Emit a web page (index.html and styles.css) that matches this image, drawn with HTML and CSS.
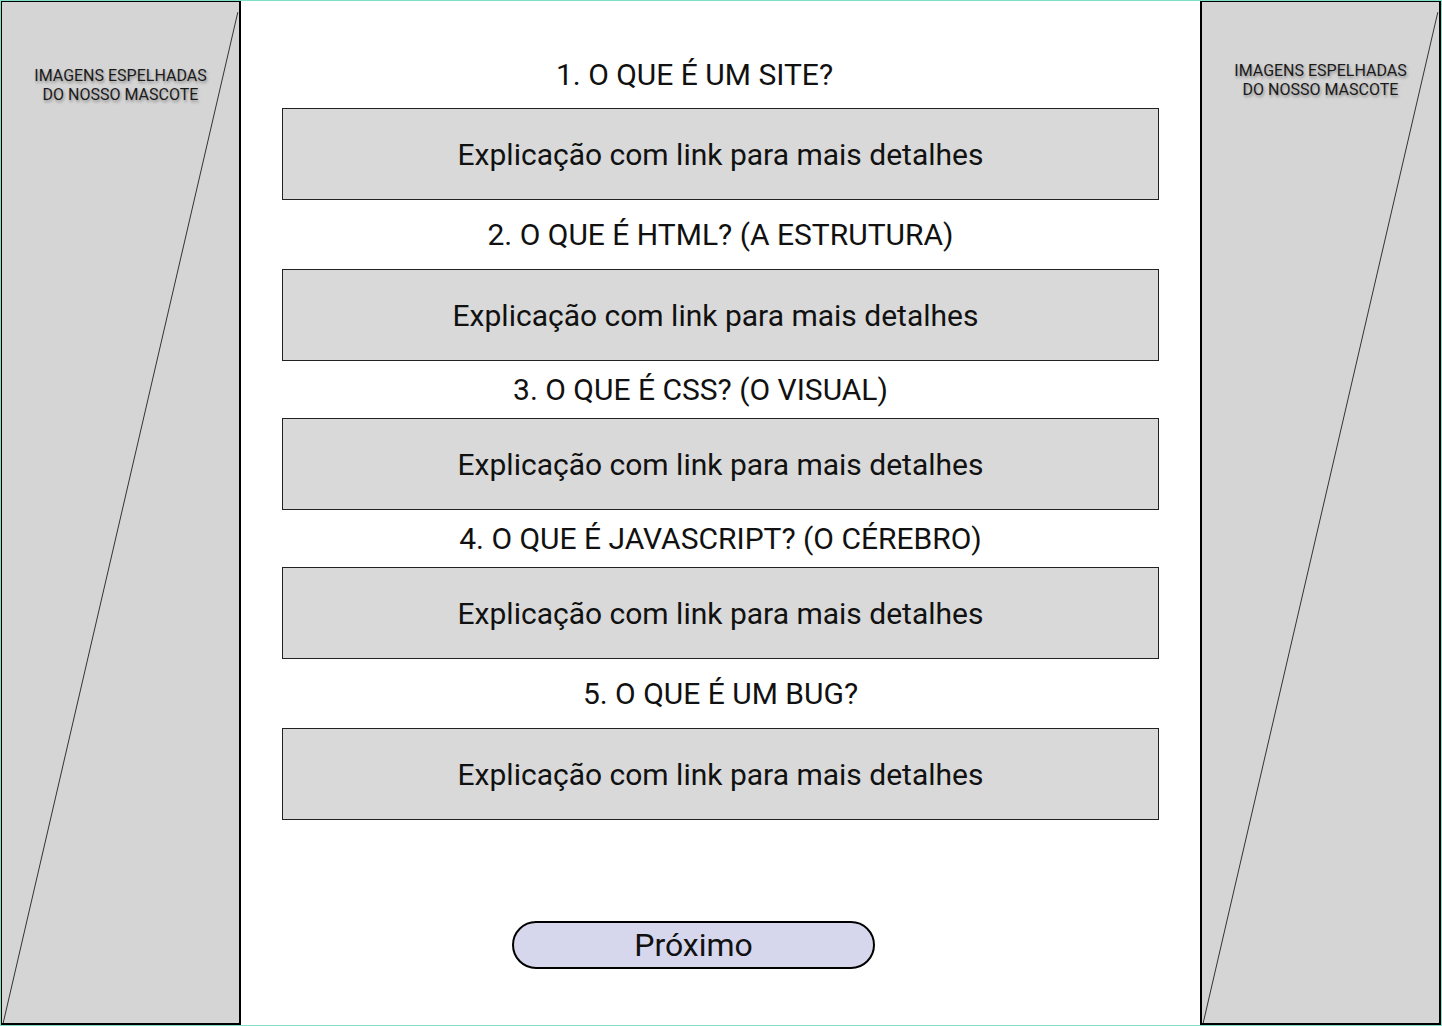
FILE: index.html
```html
<!DOCTYPE html>
<html lang="pt">
<head>
<meta charset="utf-8">
<title>Guia</title>
<link rel="stylesheet" href="styles.css">
</head>
<body>
<div class="page">
  <aside class="side side-left">
    <svg class="diag" viewBox="0 0 100 100" preserveAspectRatio="none"><line x1="99.5" y1="1" x2="0.5" y2="100" vector-effect="non-scaling-stroke"/></svg>
    <p class="side-text">IMAGENS ESPELHADAS<br>DO NOSSO MASCOTE</p>
  </aside>
  <main class="center">
    <h2 class="q q1">1. O QUE É UM SITE?</h2>
    <div class="box">Explicação com link para mais detalhes</div>
    <h2 class="q q2">2. O QUE É HTML? (A ESTRUTURA)</h2>
    <div class="box box2">Explicação com link para mais detalhes</div>
    <h2 class="q q3">3. O QUE É CSS? (O VISUAL)</h2>
    <div class="box">Explicação com link para mais detalhes</div>
    <h2 class="q q4">4. O QUE É JAVASCRIPT? (O CÉREBRO)</h2>
    <div class="box">Explicação com link para mais detalhes</div>
    <h2 class="q q5">5. O QUE É UM BUG?</h2>
    <div class="box">Explicação com link para mais detalhes</div>
    <button class="next">Próximo</button>
  </main>
  <aside class="side side-right">
    <svg class="diag" viewBox="0 0 100 100" preserveAspectRatio="none"><line x1="99.5" y1="1" x2="0.5" y2="100" vector-effect="non-scaling-stroke"/></svg>
    <p class="side-text">IMAGENS ESPELHADAS<br>DO NOSSO MASCOTE</p>
  </aside>
</div>
</body>
</html>
```

FILE: styles.css
```css
* { box-sizing: border-box; }
html, body { margin: 0; padding: 0; background: #fff; }
body { font-family: Roboto, "Liberation Sans", sans-serif; color: #111; }

.page {
  width: 1442px;
  height: 1026px;
  border: 1px solid #7fdfc8;
  display: grid;
  grid-template-columns: 240px 959px 241px;
}

.side {
  position: relative;
  background: #d5d5d5;
  border: 2px solid #000;
  border-top-width: 1px;
}
.side-left { border-left-width: 1px; }
.side-right { border-right-width: 2px; }

.diag {
  position: absolute;
  left: 0; top: 0;
  width: 100%; height: 100%;
}
.diag line { stroke: #333; stroke-width: 1; }

.side-text {
  position: relative;
  margin: 0;
  text-align: center;
  font-size: 16px;
  line-height: 19px;
  color: #1a1a1a;
  text-shadow: 1px 2px 3px rgba(0,0,0,0.35);
}
.side-left .side-text { padding-top: 64px; }
.side-right .side-text { padding-top: 59px; }

.center {
  display: flex;
  flex-direction: column;
  padding: 0 41px 0 41px;
}

.q {
  margin: 0;
  font-weight: 400;
  font-size: 30px;
  line-height: 34px;
  height: 34px;
  text-align: center;
  color: #111;
}
.q1 { margin-top: 57px; margin-bottom: 16px; padding-right: 52px; }
.q2 { margin-top: 18px; margin-bottom: 17px; }
.q3 { margin-top: 12px; margin-bottom: 11px; padding-right: 40px; }
.q4 { margin-top: 12px; margin-bottom: 11px; }
.q5 { margin-top: 18px; margin-bottom: 17px; }

.box {
  height: 92px;
  background: #d9d9d9;
  border: 1px solid #222;
  display: flex;
  align-items: center;
  justify-content: center;
  font-size: 30px;
  color: #111;
}
.box2 { padding-right: 10px; }

.next {
  align-self: flex-start;
  margin-top: 101px;
  margin-left: 230px;
  width: 363px;
  height: 48px;
  border: 2px solid #000;
  border-radius: 24px;
  background: #d6d6ec;
  font-family: Roboto, "Liberation Sans", sans-serif;
  font-size: 32px;
  color: #111;
  padding: 0 0 0;
  line-height: 44px;
}
```
